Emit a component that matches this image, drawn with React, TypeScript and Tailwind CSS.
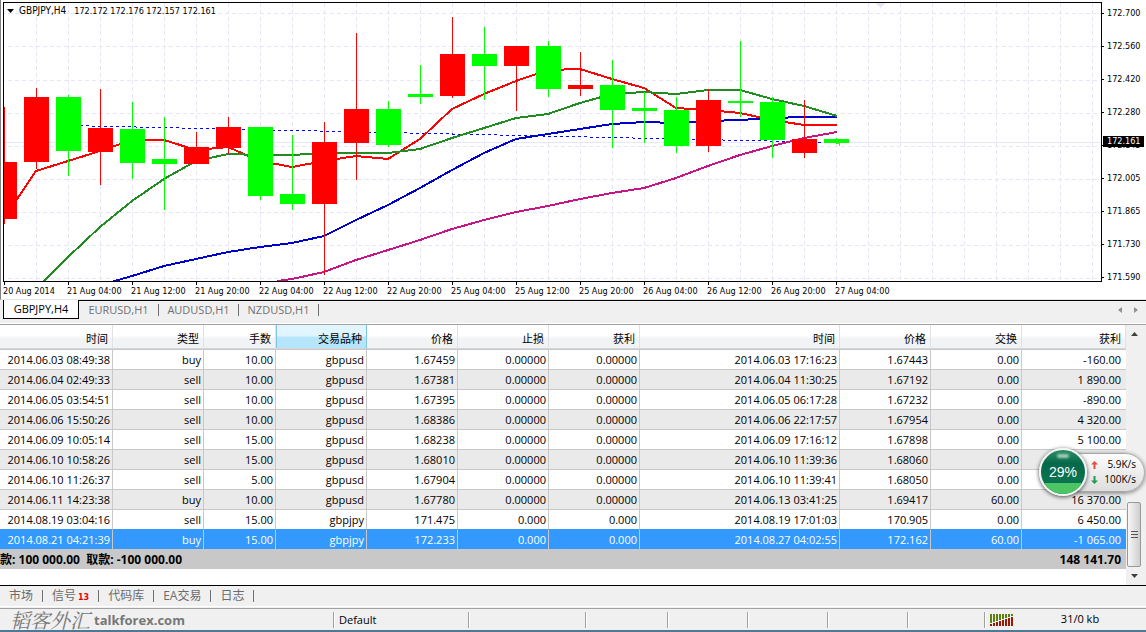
import React from "react";
import clsx from "clsx";

interface Candle {
  up: boolean;
  top: number;
  bottom: number;
  high: number;
  low: number;
}

interface Trade {
  opened: string;
  type: string;
  size: string;
  symbol: string;
  openPrice: string;
  stopLoss: string;
  takeProfit: string;
  closed: string;
  closePrice: string;
  swap: string;
  profit: string;
}

const STEP = 32;
const FIRST_X = 4;

// [up, body top, body bottom, high, low]
const candles: Candle[] = (
  [
    [false, 162, 219, 107, 224],
    [false, 97, 162, 88, 169],
    [true, 97, 151, 95, 176],
    [false, 128, 152, 89, 185],
    [true, 129, 163, 102, 179],
    [true, 159, 164, 117, 210],
    [false, 147, 164, 132, 164],
    [false, 127, 148, 117, 154],
    [true, 127, 196, 127, 200],
    [true, 194, 204, 135, 210],
    [false, 142, 204, 122, 275],
    [false, 109, 143, 33, 180],
    [true, 109, 145, 101, 147],
    [true, 94, 97, 65, 104],
    [false, 54, 96, 17, 98],
    [true, 54, 66, 27, 100],
    [false, 46, 66, 46, 111],
    [true, 46, 89, 41, 97],
    [false, 85, 89, 52, 96],
    [true, 85, 110, 60, 148],
    [true, 108, 111, 92, 143],
    [true, 110, 146, 97, 153],
    [false, 100, 146, 89, 152],
    [true, 101, 103, 41, 117],
    [true, 102, 140, 97, 158],
    [false, 139, 153, 100, 158],
    [true, 139, 143, 138, 144],
  ] as [boolean, number, number, number, number][]
).map(([up, top, bottom, high, low]) => ({ up, top, bottom, high, low }));

const averages = [
  {
    color: "#c71585",
    points:
      "277,281 292,279 324,272 356,260 388,250 420,240 452,229 484,220 516,212 548,206 580,199 612,193 644,188 676,178 708,166 740,155 772,146 804,138 837,132",
  },
  {
    color: "#0000cd",
    points:
      "111,282 132,276 164,266 196,259 228,252 260,247 292,243 324,236 356,220 388,205 420,188 452,170 484,153 516,139 548,134 580,129 612,124 644,122 676,123 708,121 740,120 772,118 804,117 837,117",
  },
  {
    color: "#ff0000",
    points:
      "4,219 17,199 36,171 68,161 100,151 132,140 164,140 196,150 228,147 260,161 292,167 324,161 356,156 388,159 420,139 452,109 484,94 516,81 548,70 580,69 612,79 644,88 676,108 708,110 740,113 772,120 804,125 837,125",
  },
  {
    color: "#228b22",
    points:
      "43,282 68,257 100,227 132,201 164,179 196,161 228,154 260,155 292,155 324,153 388,153 420,149 452,138 484,128 516,118 548,114 580,103 612,94 644,92 676,94 708,90 740,90 772,99 804,106 837,116",
  },
];

const gridRows = [13, 46, 80, 113, 146, 179, 212, 245, 278];
const gridColumns = Array.from({ length: 60 }, (_, i) => FIRST_X + (i + 1) * STEP);

const prices = ["172.700", "172.560", "172.420", "172.280", "172.145", "172.005", "171.865", "171.730", "171.590"];

const times = [
  "20 Aug 2014",
  "21 Aug 04:00",
  "21 Aug 12:00",
  "21 Aug 20:00",
  "22 Aug 04:00",
  "22 Aug 12:00",
  "22 Aug 20:00",
  "25 Aug 04:00",
  "25 Aug 12:00",
  "25 Aug 20:00",
  "26 Aug 04:00",
  "26 Aug 12:00",
  "26 Aug 20:00",
  "27 Aug 04:00",
];

const columns: { key: keyof Trade; label: string; width: string }[] = [
  { key: "opened", label: "时间", width: "w-[113px]" },
  { key: "type", label: "类型", width: "w-[91px]" },
  { key: "size", label: "手数", width: "w-[72px]" },
  { key: "symbol", label: "交易品种", width: "w-[91px]" },
  { key: "openPrice", label: "价格", width: "w-[91px]" },
  { key: "stopLoss", label: "止损", width: "w-[91px]" },
  { key: "takeProfit", label: "获利", width: "w-[91px]" },
  { key: "closed", label: "时间", width: "w-[200px]" },
  { key: "closePrice", label: "价格", width: "w-[91px]" },
  { key: "swap", label: "交换", width: "w-[91px]" },
  { key: "profit", label: "获利", width: "w-[104px]" },
];

const trades: Trade[] = [
  ["2014.06.03 08:49:38", "buy", "10.00", "gbpusd", "1.67459", "0.00000", "0.00000", "2014.06.03 17:16:23", "1.67443", "0.00", "-160.00"],
  ["2014.06.04 02:49:33", "sell", "10.00", "gbpusd", "1.67381", "0.00000", "0.00000", "2014.06.04 11:30:25", "1.67192", "0.00", "1 890.00"],
  ["2014.06.05 03:54:51", "sell", "10.00", "gbpusd", "1.67395", "0.00000", "0.00000", "2014.06.05 06:17:28", "1.67232", "0.00", "-890.00"],
  ["2014.06.06 15:50:26", "sell", "10.00", "gbpusd", "1.68386", "0.00000", "0.00000", "2014.06.06 22:17:57", "1.67954", "0.00", "4 320.00"],
  ["2014.06.09 10:05:14", "sell", "15.00", "gbpusd", "1.68238", "0.00000", "0.00000", "2014.06.09 17:16:12", "1.67898", "0.00", "5 100.00"],
  ["2014.06.10 10:58:26", "sell", "15.00", "gbpusd", "1.68010", "0.00000", "0.00000", "2014.06.10 11:39:36", "1.68060", "0.00", ""],
  ["2014.06.10 11:26:37", "sell", "5.00", "gbpusd", "1.67904", "0.00000", "0.00000", "2014.06.10 11:39:41", "1.68050", "0.00", ""],
  ["2014.06.11 14:23:38", "buy", "10.00", "gbpusd", "1.67780", "0.00000", "0.00000", "2014.06.13 03:41:25", "1.69417", "60.00", "16 370.00"],
  ["2014.08.19 03:04:16", "sell", "15.00", "gbpjpy", "171.475", "0.000", "0.000", "2014.08.19 17:01:03", "170.905", "0.00", "6 450.00"],
  ["2014.08.21 04:21:39", "buy", "15.00", "gbpjpy", "172.233", "0.000", "0.000", "2014.08.27 04:02:55", "172.162", "60.00", "-1 065.00"],
].map(([opened, type, size, symbol, openPrice, stopLoss, takeProfit, closed, closePrice, swap, profit]) => ({
  opened,
  type,
  size,
  symbol,
  openPrice,
  stopLoss,
  takeProfit,
  closed,
  closePrice,
  swap,
  profit,
}));

const Plot: React.FC = () => (
  <svg className="block h-[278px] w-full" shapeRendering="crispEdges" aria-hidden="true">
    <g transform="translate(-4 -3)">
      {gridColumns.map((x) => (
        <line key={x} x1={x + 0.5} x2={x + 0.5} y1={3} y2={281} stroke="#e6e6fa" strokeDasharray="4 3" />
      ))}
      {gridRows.map((y) => (
        <line key={y} x1={1} x2={2000} y1={y + 0.5} y2={y + 0.5} stroke="#e6e6fa" strokeDasharray="4 3" />
      ))}
      <line x1={4} x2={2000} y1={142.5} y2={142.5} stroke="#e6e6fa" />
      <path d="M876 3h9l-4 5h-1z" fill="#e6e6fa" />
      <line x1={68} y1={125.5} x2={836} y2={142.5} stroke="#0000ff" strokeDasharray="3 3" />
      {averages.map((line) => (
        <polyline key={line.color} points={line.points} fill="none" stroke={line.color} strokeWidth={2} />
      ))}
      {candles.map((candle, i) => {
        const x = FIRST_X + i * STEP;
        return (
          <g key={x} fill={candle.up ? "#00ff00" : "#ff0000"}>
            <rect x={x} y={candle.high} width={1} height={candle.low - candle.high} />
            <rect x={x - 12} y={candle.top} width={25} height={candle.bottom - candle.top} />
          </g>
        );
      })}
      <path d="M837 143h3v3h-1v-2h-2z" fill="#daa520" />
    </g>
  </svg>
);

const Chart: React.FC = () => (
  <section className="border-b border-l border-b-[#e3e3e3] border-l-[#808080] bg-white pt-0.5 pl-0.5 font-['DejaVu_Sans_Condensed','DejaVu_Sans',sans-serif] text-[9px] leading-3">
    <div className="flex items-start">
      <div className="relative min-w-0 flex-1 border border-black">
        <Plot />
        <div className="absolute top-0.5 left-[3px] flex items-center">
          <svg width="8" height="4" viewBox="0 0 8 4" aria-hidden="true">
            <path d="M0 0h7L3.500 4z" />
          </svg>
          <h1 className="ml-1 text-[10px]">GBPJPY,H4</h1>
          <span className="ml-2">172.172 172.176 172.157 172.161</span>
        </div>
      </div>
      <ol className="relative w-11 pt-1">
        {prices.map((price) => (
          <li key={price} className="flex h-[33px] items-start last-of-type:h-3 nth-9:h-3">
            <span className="mt-[7px] h-px w-0.5 bg-black" />
            <span className="mt-px ml-[3px]">{price}</span>
          </li>
        ))}
        <li className="absolute top-[134px] left-px h-[11px] w-[41px] bg-black pl-1 leading-[11px] text-white">172.161</li>
      </ol>
    </div>
    <ol className="flex h-[17px] overflow-hidden">
      {times.map((time) => (
        <li key={time} className="w-16 shrink-0 whitespace-nowrap">
          <div className="ml-px h-[3px] w-px bg-black" />
          {time}
        </li>
      ))}
    </ol>
  </section>
);

const ChartTabs: React.FC = () => (
  <nav className="flex h-6 items-start border-b border-white pl-[3px]">
    <button className="h-[19px] w-[76px] border border-t-0 border-black bg-white text-black">GBPJPY,H4</button>
    <div className="flex h-[19px] flex-1 items-center border-t border-black text-[#707070]">
      {["EURUSD,H1", "AUDUSD,H1", "NZDUSD,H1"].map((name) => (
        <button key={name} className="h-3 w-20 border-r border-[#707070] leading-3">
          {name}
        </button>
      ))}
      <button aria-label="Scroll left" className="ml-auto px-1.5">
        <svg width="4" height="6" viewBox="0 0 4 6" fill="#909090">
          <path d="M4 0v6L0 3z" />
        </svg>
      </button>
      <button aria-label="Scroll right" className="mr-0.5 px-1.5">
        <svg width="4" height="6" viewBox="0 0 4 6" fill="#909090">
          <path d="M0 0v6L4 3z" />
        </svg>
      </button>
    </div>
  </nav>
);

const TradeTable: React.FC = () => (
  <table className="w-full table-fixed border-separate border-spacing-0 text-right whitespace-nowrap">
    <thead>
      <tr>
        {columns.map(({ key, label, width }) => (
          <th
            key={key}
            scope="col"
            className={clsx(
              "h-6 border-r border-b border-b-[#d5d5d5] p-0 pt-1 pr-1 leading-4 font-normal",
              width,
              key === "symbol"
                ? "border-r-[#7fc4e0] bg-linear-to-b from-[#e0f5fe] from-45% to-[#b5e5fa] to-55% shadow-[inset_1px_0_#7fc4e0]"
                : "border-r-[#e0e3e6] bg-linear-to-b from-white from-45% to-[#f1f3f5] to-60%"
            )}
          >
            {label}
          </th>
        ))}
      </tr>
    </thead>
    <tbody>
      {trades.map((trade, i) => {
        const selected = i === trades.length - 1;
        return (
          <tr
            key={trade.opened}
            className={clsx(selected ? "bg-[#3399ff] text-white" : i % 2 ? "bg-[#eaeaea]" : "bg-white")}
          >
            {columns.map(({ key }) => (
              <td
                key={key}
                className={clsx(
                  "h-5 border-t p-0 leading-[19px]",
                  key === "profit" ? "pr-[5px]" : "border-r border-r-[#c8c8c8] pr-0.5",
                  selected ? "border-t-[#3399ff]" : "border-t-[#c8c8c8]"
                )}
              >
                {trade[key]}
              </td>
            ))}
          </tr>
        );
      })}
    </tbody>
    <tfoot>
      <tr className="bg-[#c8c8c8] text-xs font-bold">
        <td colSpan={9} className="h-5 p-0 pt-0.5 text-left leading-[18px] whitespace-pre">
          款: 100 000.00  取款: -100 000.00
        </td>
        <td colSpan={2} className="h-5 p-0 pt-0.5 pr-[5px] leading-[18px]">
          148 141.70
        </td>
      </tr>
    </tfoot>
  </table>
);

const Scrollbar: React.FC = () => (
  <div className="flex w-4 shrink-0 flex-col items-center bg-[#f0f0f0]">
    <button aria-label="Scroll up" className="flex h-[18px] w-4 items-center justify-center">
      <svg width="7" height="4" viewBox="0 0 7 4" fill="#404040">
        <path d="M3.500 0L7 4H0z" />
      </svg>
    </button>
    <div className="flex-1" />
    <div className="flex h-[65px] w-[14px] flex-col items-center justify-center gap-0.5 rounded-xs border border-[#989898] bg-linear-to-r from-[#f7f7f7] to-[#cfcfd1]">
      <span className="h-px w-[7px] bg-[#555]" />
      <span className="h-px w-[7px] bg-[#555]" />
      <span className="h-px w-[7px] bg-[#555]" />
    </div>
    <button aria-label="Scroll down" className="flex h-[18px] w-4 items-center justify-center">
      <svg width="7" height="4" viewBox="0 0 7 4" fill="#404040">
        <path d="M3.500 4L7 0H0z" />
      </svg>
    </button>
  </div>
);

const SpeedBall: React.FC = () => (
  <aside className="absolute top-[123px] right-px flex items-center">
    <div className="relative z-10 flex size-12 items-center justify-center overflow-hidden rounded-full border-2 border-[#f4f4f4] bg-linear-to-b from-[#2a9066] from-0% via-[#04684a] via-30% to-[#0a7450] to-70% font-['Liberation_Sans',sans-serif] text-sm text-white shadow-[0_1px_4px_rgba(0,0,0,0.7)]">
      <div className="absolute inset-x-0 bottom-0 h-[11px] bg-[#4cc665]" />
      <div className="absolute top-1 h-1 w-3 rounded-full bg-white/60 blur-[1px]" />
      <span className="relative">29%</span>
    </div>
    <div className="-ml-6 flex h-[39px] w-[82px] flex-col justify-center rounded-full border border-[#a8a8a8] bg-linear-to-b from-[#fdfdfd] to-[#dedede] pr-2 pl-[27px] text-[10px] leading-[15px] shadow-[0_1px_4px_rgba(0,0,0,0.5)]">
      <div className="flex items-center justify-between">
        <svg width="7" height="8" viewBox="0 0 7 8" fill="#e2503f">
          <path d="M3.500 0L7 3.500H4.500V8h-2V3.500H0z" />
        </svg>
        5.9K/s
      </div>
      <div className="flex items-center justify-between">
        <svg width="7" height="8" viewBox="0 0 7 8" fill="#249a50">
          <path d="M3.500 8L7 4.500H4.500V0h-2v4.500H0z" />
        </svg>
        100K/s
      </div>
    </div>
  </aside>
);

const TerminalTabs: React.FC = () => (
  <nav className="flex h-[21px] items-center border-b border-white text-xs leading-3 text-[#6b6b6b]">
    {["市场", "信号", "代码库", "EA交易", "日志"].map((name) => (
      <button key={name} className="flex h-3 items-center border-r border-[#707070] px-[9px] whitespace-nowrap">
        {name}
        {name === "信号" && <span className="ml-0.5 pt-1 font-['DejaVu_Sans',sans-serif] text-[8px] font-bold text-red-600">13</span>}
      </button>
    ))}
  </nav>
);

const statusCells = ["w-[135px]", "w-[117px]", "w-[82px]", "w-20", "w-20", "w-20", "w-[77px]"];

const StatusBar: React.FC = () => (
  <footer className="mt-px flex h-6 items-center border-t border-b-2 border-t-[#a0a0a0] border-b-[#4d7896]">
    <div className="flex h-5 flex-1 items-center gap-1 pl-2.5 text-[#777]">
      <span className="font-['Noto_Serif_CJK_SC','Noto_Sans_CJK_SC',serif] text-xl leading-5 italic">韬客外汇</span>
      <a href="#talkforex" className="text-[13px] leading-4 font-bold">
        talkforex.com
      </a>
    </div>
    {statusCells.map((width, i) => (
      <div key={i} className={clsx("h-4 shrink-0 border-l border-[#a0a0a0] pl-[5px] leading-4 shadow-[inset_1px_0_white]", width)}>
        {i === 0 && "Default"}
      </div>
    ))}
    <div className="flex h-4 w-[162px] shrink-0 items-center border-l border-[#a0a0a0] pl-[5px] shadow-[inset_1px_0_white]">
      <svg width="24" height="12" viewBox="0 0 24 12" shapeRendering="crispEdges" aria-hidden="true">
        {[9, 8, 7, 6, 5, 4, 3, 2].map((top, i) => (
          <g key={top}>
            <rect x={i * 3} y={0} width={2} height={top} fill="#5f7f0c" />
            <rect x={i * 3} y={top + 1} width={2} height={11 - top} fill="#9c1806" />
          </g>
        ))}
      </svg>
      <span className="flex-1 text-center">31/0 kb</span>
    </div>
  </footer>
);

const App: React.FC = () => {
  return (
    <div className="flex min-h-screen flex-col bg-[#f0f0f0] font-['Open_Sans','Noto_Sans_CJK_SC',sans-serif] text-[11px] text-black">
      <Chart />
      <ChartTabs />
      <main className="relative flex flex-1 border-t border-b border-t-[#a0a0a0] border-b-black">
        <div className="min-w-0 flex-1 bg-white">
          <TradeTable />
        </div>
        <Scrollbar />
        <div className="w-1" />
        <SpeedBall />
      </main>
      <TerminalTabs />
      <StatusBar />
    </div>
  );
};

export default App;
